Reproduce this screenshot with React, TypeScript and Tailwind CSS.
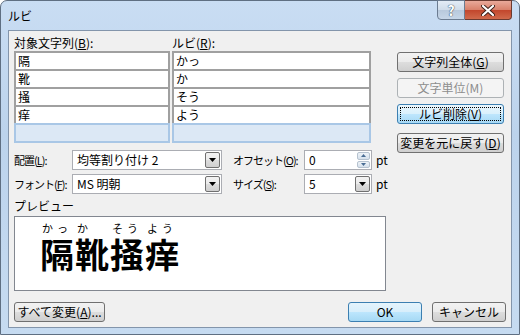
import React from 'react';

const font = { fontFamily: '"Noto Sans CJK JP", "Noto Sans", sans-serif' };

const Btn: React.FC<{ children: React.ReactNode; kind?: 'normal' | 'disabled' | 'focus' | 'default'; className?: string }> = ({ children, kind = 'normal', className = '' }) => {
  const base = 'flex items-center justify-center whitespace-nowrap rounded-[3px] border text-[12px] leading-none';
  const styles = {
    normal: 'border-[#707070] bg-[linear-gradient(#f2f2f2_0%,#ebebeb_50%,#dddddd_51%,#cfcfcf_100%)] text-black',
    disabled: 'border-[#adb2b5] bg-[#f4f4f4] text-[#8d8d8d]',
    focus: 'border-[#3c7fb1] bg-[linear-gradient(#eaf6fd_0%,#d9f0fc_50%,#bee6fd_51%,#a7d9f5_100%)] text-black',
    default: 'border-[#3c7fb1] bg-[linear-gradient(#e5f4fc_0%,#d7eefb_50%,#bde6fd_51%,#a6d9f4_100%)] text-black',
  }[kind];
  return (
    <div className={`${base} ${styles} ${className}`}>
      {kind === 'focus' ? (
        <div className="flex h-[calc(100%-4px)] w-[calc(100%-4px)] items-center justify-center border border-dotted border-black">{children}</div>
      ) : (
        children
      )}
    </div>
  );
};

const Arrow = () => (
  <svg width="7" height="4" viewBox="0 0 7 4"><path d="M0 0h7L3.5 4z" fill="#000" /></svg>
);

const Combo: React.FC<{ value: string; w: string }> = ({ value, w }) => (
  <div className={`flex h-[20px] ${w} shrink-0 items-stretch border border-[#abadb3] bg-white`}>
    <div className="flex flex-1 items-center whitespace-nowrap pl-[4px] text-[12px]">{value}</div>
    <div className="m-[1px] flex w-[15px] items-center justify-center rounded-[2px] border border-[#707070] bg-[linear-gradient(#f2f2f2_0%,#ebebeb_50%,#dddddd_51%,#cfcfcf_100%)]">
      <Arrow />
    </div>
  </div>
);

const Spin: React.FC<{ value: string }> = ({ value }) => (
  <div className="flex h-[20px] w-[68px] shrink-0 items-stretch border border-[#abadb3] bg-white">
    <div className="flex flex-1 items-center pl-[4px] text-[12px]">{value}</div>
    <div className="my-[1px] mr-[1px] flex w-[13px] flex-col gap-[1px]">
      <div className="flex flex-1 items-center justify-center rounded-[2px] border border-[#b6c2cf] bg-[linear-gradient(#eef3f8,#d6e1ec)]">
        <svg width="5" height="3" viewBox="0 0 5 3"><path d="M0 3h5L2.5 0z" fill="#4a6d94" /></svg>
      </div>
      <div className="flex flex-1 items-center justify-center rounded-[2px] border border-[#b6c2cf] bg-[linear-gradient(#eef3f8,#d6e1ec)]">
        <svg width="5" height="3" viewBox="0 0 5 3"><path d="M0 0h5L2.5 3z" fill="#4a6d94" /></svg>
      </div>
    </div>
  </div>
);

const rows = [
  ['隔', 'かっ'],
  ['靴', 'か'],
  ['掻', 'そう'],
  ['痒', 'よう'],
];

export default function App() {
  return (
    <div style={font} className="h-[335px] w-[520px] overflow-hidden bg-white">
      <div className="flex h-[335px] w-[520px] flex-col rounded-t-[7px] border border-[#5f6f82] bg-[linear-gradient(180deg,#c9ddf3_0%,#bcd3ec_40%,#c6dbf1_100%)]">
        {/* Title bar */}
        <div className="relative flex h-[29px] items-center px-[7px]">
          <span className="text-[12px] text-black">ルビ</span>
          <div className="absolute right-[7px] top-[-1px] flex h-[20px]">
            <div className="flex w-[28px] items-center justify-center rounded-bl-[4px] border border-[#6b7c91] bg-[linear-gradient(#e3ecf6_0%,#cfdcea_50%,#b8c9dc_51%,#c6d6e8_100%)]">
              <span className="text-[14px] font-bold leading-none text-white [text-shadow:0_0_1px_#2b3b50,0_0_1px_#2b3b50]">?</span>
            </div>
            <div className="flex w-[47px] items-center justify-center rounded-br-[4px] border border-l-0 border-[#6b3a30] bg-[linear-gradient(#e9a99a_0%,#d8806a_50%,#c2462c_51%,#d06a4c_100%)]">
              <svg width="14" height="11" viewBox="0 0 14 11">
                <path d="M2 1l10 9M12 1L2 10" stroke="#3b1f18" strokeWidth="4" strokeLinecap="round" />
                <path d="M2 1l10 9M12 1L2 10" stroke="#fff" strokeWidth="2.2" strokeLinecap="round" />
              </svg>
            </div>
          </div>
        </div>

        {/* Client area */}
        <div className="mx-[7px] flex h-[298px] flex-col border border-[#8395ab] bg-[#f0f0f0] px-[5px] text-[12px] text-black">
          <div className="flex">
            {/* left column */}
            <div className="flex w-[372px] flex-col">
              <div className="mt-[5px] flex h-[14px] items-center whitespace-nowrap leading-none">
                <span className="w-[158px]">対象文字列(<u>B</u>):</span>
                <span>ルビ(<u>R</u>):</span>
              </div>
              <div className="mt-[1px] grid w-[357px] grid-cols-[156px_199px] gap-x-[2px]">
                {rows.map(([a, b]) => (
                  <React.Fragment key={a}>
                    <div className="flex h-[18px] items-center border-x-2 border-t-2 border-[#a0a0a0] bg-white pl-[2px] leading-none">{a}</div>
                    <div className="flex h-[18px] items-center border-x-2 border-t-2 border-[#a0a0a0] bg-white pl-[2px] leading-none">{b}</div>
                  </React.Fragment>
                ))}
                <div className="h-[20px] border-2 border-[#a9c7e6] bg-[#dce8f5]" />
                <div className="h-[20px] border-2 border-[#a9c7e6] bg-[#dce8f5]" />
              </div>

              <div className="mt-[7px] flex h-[20px] items-center whitespace-nowrap">
                <span className="w-[58px] shrink-0 text-[11px] tracking-[-1px]">配置(<u>L</u>):</span>
                <Combo value="均等割り付け 2" w="w-[150px]" />
                <span className="ml-[11px] w-[71px] shrink-0 text-[11px] tracking-[-1px]">オフセット(<u>O</u>):</span>
                <Spin value="0" />
                <span className="ml-[4px]">pt</span>
              </div>
              <div className="mt-[4px] flex h-[20px] items-center whitespace-nowrap">
                <span className="w-[58px] shrink-0 text-[11px] tracking-[-1px]">フォント(<u>F</u>):</span>
                <Combo value="MS 明朝" w="w-[150px]" />
                <span className="ml-[11px] w-[71px] shrink-0 text-[11px] tracking-[-1px]">サイズ(<u>S</u>):</span>
                <Combo value="5" w="w-[68px]" />
                <span className="ml-[4px]">pt</span>
              </div>
              <div className="mt-[6px] h-[14px] leading-none">プレビュー</div>
              <div className="mt-[2px] flex h-[75px] items-start border border-[#828790] bg-white pl-[25px] pt-[5px]">
                {rows.map(([k, r]) => (
                  <div key={k} className="flex w-[35px] flex-col items-stretch">
                    <div className="flex h-[12px] justify-start gap-[4px] pl-[2px] text-[11px] leading-[12px]">
                      {r.split('').map((c, i) => (
                        <span key={i}>{c}</span>
                      ))}
                    </div>
                    <div className="mt-[2px] h-[36px] text-[34px] font-semibold leading-[36px]">{k}</div>
                  </div>
                ))}
              </div>
            </div>

            {/* right buttons */}
            <div className="ml-[11px] mt-[21px] flex w-[107px] flex-col">
              <Btn className="h-[20px]">文字列全体(<u>G</u>)</Btn>
              <Btn kind="disabled" className="mt-[6px] h-[20px]">文字単位(M)</Btn>
              <Btn kind="focus" className="mt-[6px] h-[20px]">ルビ削除(<u>V</u>)</Btn>
              <Btn className="mt-[9px] h-[20px]">変更を元に戻す(<u>D</u>)</Btn>
            </div>
          </div>

          <div className="mt-[11px] flex h-[20px]">
            <Btn className="w-[91px]">すべて変更(<u>A</u>)...</Btn>
            <div className="flex-1" />
            <Btn kind="default" className="w-[74px]">OK</Btn>
            <Btn className="ml-[10px] w-[74px]">キャンセル</Btn>
          </div>
        </div>
      </div>
    </div>
  );
}
